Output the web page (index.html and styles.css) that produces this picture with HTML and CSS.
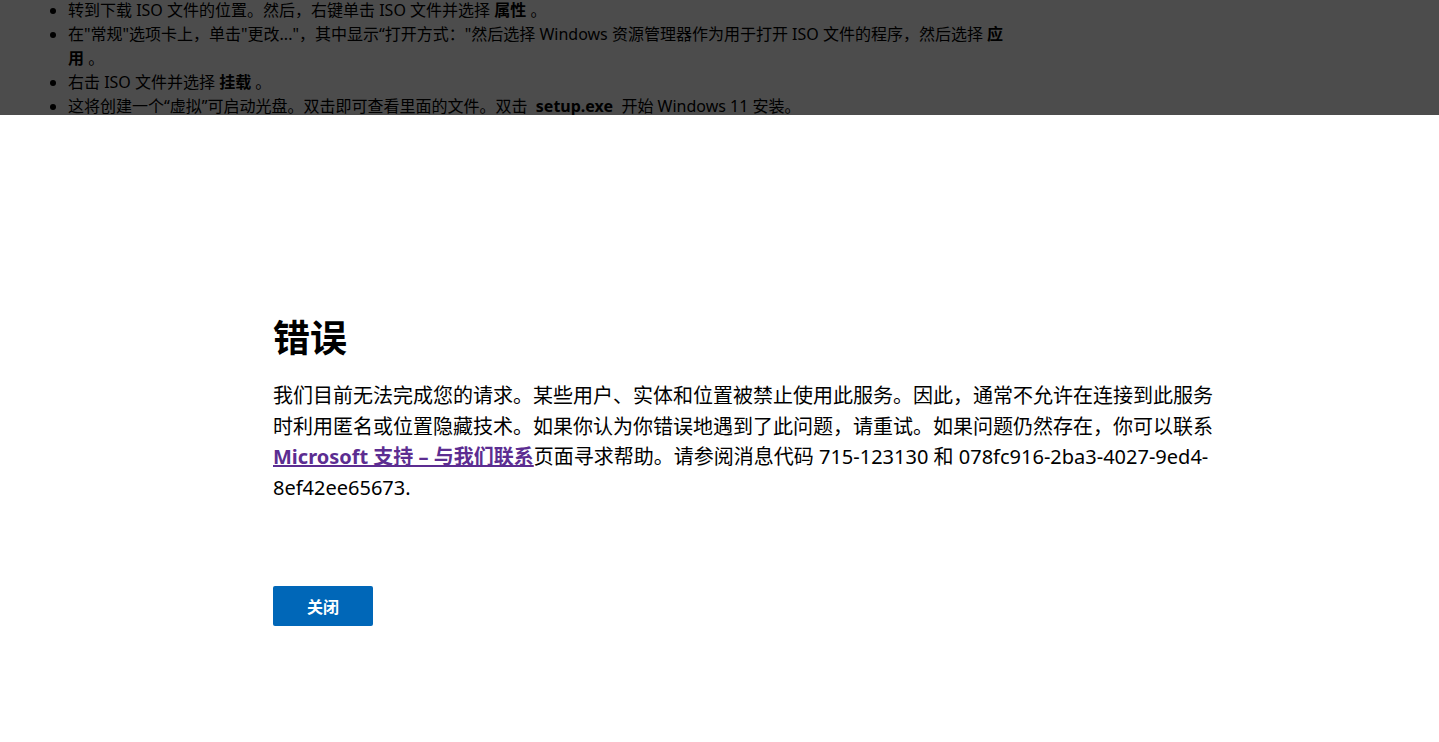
FILE: index.html
```html
<!DOCTYPE html>
<html lang="zh-CN">
<head>
    <meta charset="UTF-8">
    <meta name="viewport" content="width=device-width, initial-scale=1.0">
    <link rel="stylesheet" href="styles.css">
    <title>错误</title>
</head>
<body>
    <div class="page">
        <ul class="steps">
            <li>转到下载 ISO 文件的位置。然后，右键单击 ISO 文件并选择 <b>属性</b> 。</li>
            <li>在"常规"选项卡上，单击"更改..."，其中显示“打开方式："然后选择 Windows 资源管理器作为用于打开 ISO 文件的程序，然后选择 <b>应用</b> 。</li>
            <li>右击 ISO 文件并选择 <b>挂载</b> 。</li>
            <li>这将创建一个“虚拟”可启动光盘。双击即可查看里面的文件。双击 &nbsp;<b>setup.exe</b>&nbsp; 开始 Windows 11 安装。</li>
        </ul>
    </div>

    <div class="overlay"></div>

    <div class="dialog" role="dialog">
        <div class="dialog-content">
            <h1 class="dialog-title">错误</h1>
            <p class="dialog-text">我们目前无法完成您的请求。某些用户、实体和位置被禁止使用此服务。因此，通常不允许在连接到此服务时利用匿名或位置隐藏技术。如果你认为你错误地遇到了此问题，请重试。如果问题仍然存在，你可以联系<a href="#" class="dialog-link">Microsoft 支持 – 与我们联系</a>页面寻求帮助。请参阅消息代码 715-123130 和 078fc916-2ba3-4027-9ed4-8ef42ee65673.</p>
            <button class="close-button">关闭</button>
        </div>
    </div>
</body>
</html>
```

FILE: styles.css
```css
body {
    font-family: "Noto Sans", "Noto Sans CJK SC", sans-serif;
    background-color: #fff;
    color: #000;
    margin: 0;
    padding: 0;
}

.page {
    padding-left: 28px;
    margin-top: -2px;
}

.steps {
    width: 937px;
    margin: 0;
    padding-left: 40px;
    font-size: 16px;
    line-height: 24px;
}

.steps b {
    font-weight: bold;
}

.overlay {
    position: fixed;
    top: 0;
    left: 0;
    right: 0;
    bottom: 0;
    background-color: rgba(0, 0, 0, 0.7);
}

.dialog {
    position: fixed;
    top: 115px;
    left: 0;
    right: 0;
    bottom: 0;
    background-color: #fff;
}

.dialog-content {
    width: 950px;
    margin-left: 273px;
    padding-top: 200px;
}

.dialog-title {
    font-size: 37px;
    font-weight: bold;
    line-height: 46px;
    margin: 0 0 20px 0;
}

.dialog-text {
    font-size: 20px;
    line-height: 1.535;
    margin: 0 0 82px 0;
}

.dialog-link {
    color: #5c2d91;
    font-weight: bold;
    text-decoration: underline;
}

.close-button {
    width: 100px;
    height: 40px;
    background-color: #0067b8;
    color: #fff;
    border: none;
    border-radius: 2px;
    font-family: inherit;
    font-size: 16px;
    font-weight: bold;
    cursor: pointer;
}
```
